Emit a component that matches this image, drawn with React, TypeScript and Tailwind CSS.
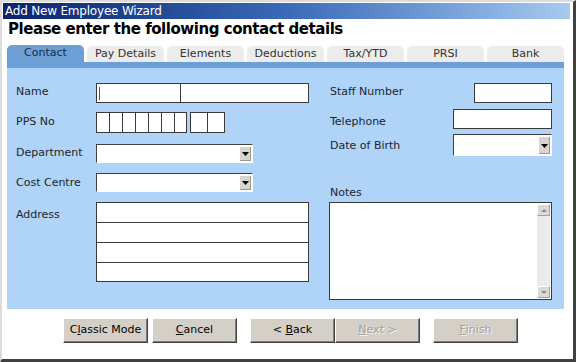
import React from 'react'

const FONT = "font-['DejaVu_Sans',Verdana,sans-serif]"

const TABS = ['Contact', 'Pay Details', 'Elements', 'Deductions', 'Tax/YTD', 'PRSI', 'Bank']

function DropButton() {
  return (
    <div className="flex h-full w-[12px] items-center justify-center border-t border-l border-t-white border-l-white bg-[#d8d5ce] shadow-[inset_-1px_-1px_#9a978f]">
      <svg width="7" height="4" viewBox="0 0 7 4">
        <polygon points="0,0 7,0 3.5,4" fill="#000" />
      </svg>
    </div>
  )
}

function Select({ w, h }: { w: string; h: string }) {
  return (
    <div className={`${w} ${h} flex justify-end border-t border-l border-b border-r border-t-[#404040] border-l-[#404040] border-b-white border-r-white bg-white pr-px py-px`}>
      <DropButton />
    </div>
  )
}

function Label({ children, mt }: { children: React.ReactNode; mt: string }) {
  return <div className={`w-[80px] shrink-0 ${mt} text-[11px] leading-[13px] text-[#1e2430]`}>{children}</div>
}

function Btn({ children, disabled, w = 'w-[85px]' }: { children: React.ReactNode; disabled?: boolean; w?: string }) {
  return (
    <div
      className={`${w} flex h-[25px] items-center justify-center whitespace-pre border border-t-white border-l-white border-r-[#404040] border-b-[#404040] bg-[#d4d0c8] text-[11px] shadow-[inset_-1px_-1px_#808080] ${
        disabled ? 'text-[#a3a09a] [text-shadow:1px_1px_0_#f4f4f4]' : 'text-black'
      }`}
    >
      {children}
    </div>
  )
}

export default function App() {
  return (
    <div className={`${FONT} box-border flex h-[362px] w-[576px] flex-col border-t-2 border-l-2 border-r-[3px] border-b-[3px] border-t-[#dcdcdc] border-l-[#dcdcdc] border-r-[#404040] border-b-[#404040] bg-white`}>
      {/* title bar */}
      <div className="ml-px mt-px flex h-[16px] w-[567px] items-center bg-gradient-to-r from-[#0a246a] via-[#3a6ab8] to-[#a6caf0] pl-[2px] text-[12px] leading-[16px] tracking-[-0.2px] text-white">
        Add New Employee Wizard
      </div>

      {/* heading */}
      <div className="ml-[6px] mt-px h-[18px] text-[15px] font-bold leading-[18px] tracking-[-0.45px] text-black">
        Please enter the following contact details
      </div>

      {/* tabs */}
      <div className="ml-[5px] mt-[7px] flex h-[17px] items-end gap-[3px]">
        {TABS.map((t, i) => (
          <div
            key={t}
            className={`flex w-[77px] items-center justify-center rounded-t-[5px] text-[11px] ${
              i === 0 ? 'h-[17px] bg-[#6c9fd6] text-[#1b2a4a]' : 'h-[16px] bg-[#ececec] text-[#333]'
            }`}
          >
            {t}
          </div>
        ))}
      </div>

      {/* panel */}
      <div className="ml-[5px] flex h-[247px] w-[557px] border-t-[6px] border-t-[#6c9fd6] bg-[#afd4f8] pl-[9px] pt-[15px]">
        {/* left column */}
        <div className="flex w-[293px] flex-col">
          <div className="flex">
            <Label mt="mt-[2px]">Name</Label>
            <div className="relative flex h-[20px] w-[213px] border border-[#3a3a3a] bg-white">
              <div className="h-full w-[84px] border-r border-[#3a3a3a]" />
              <div className="absolute left-[2px] top-[3px] h-[13px] w-px bg-[#555]" />
            </div>
          </div>

          <div className="mt-[9px] flex">
            <Label mt="mt-[3px]">PPS No</Label>
            <div className="flex h-[21px] border-r border-[#3a3a3a]">
              {[13, 13, 13, 13, 13, 13, 12].map((w, i) => (
                <div key={i} style={{ width: w }} className="h-full border-t border-b border-l border-[#3a3a3a] bg-white" />
              ))}
            </div>
            <div className="ml-[3px] flex h-[21px] border-r border-[#3a3a3a]">
              {[17, 17].map((w, i) => (
                <div key={i} style={{ width: w }} className="h-full border-t border-b border-l border-[#3a3a3a] bg-white" />
              ))}
            </div>
          </div>

          <div className="mt-[11px] flex">
            <Label mt="mt-[2px]">Department</Label>
            <Select w="w-[157px]" h="h-[19px]" />
          </div>

          <div className="mt-[10px] flex">
            <Label mt="mt-[3px]">Cost Centre</Label>
            <Select w="w-[157px]" h="h-[19px]" />
          </div>

          <div className="mt-[10px] flex">
            <Label mt="mt-[6px]">Address</Label>
            <div className="flex w-[213px] flex-col border border-[#3a3a3a] bg-white">
              <div className="h-[19px]" />
              <div className="h-[20px] border-t border-[#3a3a3a]" />
              <div className="h-[20px] border-t border-[#3a3a3a]" />
              <div className="h-[19px] border-t border-[#3a3a3a]" />
            </div>
          </div>
        </div>

        {/* right column */}
        <div className="ml-[20px] flex w-[223px] flex-col">
          <div className="flex justify-between">
            <div className="mt-[2px] pl-px text-[11px] leading-[13px] text-[#1e2430]">Staff Number</div>
            <div className="h-[20px] w-[78px] border border-[#3a3a3a] bg-white" />
          </div>
          <div className="mt-[6px] flex justify-between">
            <div className="mt-[6px] pl-px text-[11px] leading-[13px] text-[#1e2430]">Telephone</div>
            <div className="h-[20px] w-[99px] border border-[#3a3a3a] bg-white" />
          </div>
          <div className="mt-[5px] flex justify-between">
            <div className="mt-[5px] pl-px text-[11px] leading-[13px] text-[#1e2430]">Date of Birth</div>
            <Select w="w-[99px]" h="h-[22px]" />
          </div>
          <div className="mt-[30px] pl-px text-[11px] leading-[13px] text-[#1e2430]">Notes</div>
          <div className="mt-[3px] flex h-[98px] w-[223px] justify-end border border-[#3a3a3a] bg-white p-px">
            <div className="flex w-[13px] flex-col justify-between bg-[#ebebeb]">
              <div className="flex h-[12px] items-center justify-center border border-t-white border-l-white border-r-[#a0a0a0] border-b-[#a0a0a0] bg-[#dcdad5]">
                <svg width="6" height="3" viewBox="0 0 6 3">
                  <polygon points="0,3 6,3 3,0" fill="#8a8a8a" />
                </svg>
              </div>
              <div className="flex h-[12px] items-center justify-center border border-t-white border-l-white border-r-[#a0a0a0] border-b-[#a0a0a0] bg-[#dcdad5]">
                <svg width="6" height="3" viewBox="0 0 6 3">
                  <polygon points="0,0 6,0 3,3" fill="#8a8a8a" />
                </svg>
              </div>
            </div>
          </div>
        </div>
      </div>

      {/* buttons */}
      <div className="mt-[9px] flex pl-[61px]">
        <Btn>
          C<span className="underline">l</span>assic Mode
        </Btn>
        <div className="ml-[4px]">
          <Btn>
            <span className="underline">C</span>ancel
          </Btn>
        </div>
        <div className="ml-[13px]">
          <Btn>
            {'< '}
            <span className="underline">B</span>ack
          </Btn>
        </div>
        <Btn disabled>
          <span className="underline">N</span>
          {'ext >'}
        </Btn>
        <div className="ml-[13px]">
          <Btn disabled>
            <span className="underline">F</span>inish
          </Btn>
        </div>
      </div>
    </div>
  )
}
